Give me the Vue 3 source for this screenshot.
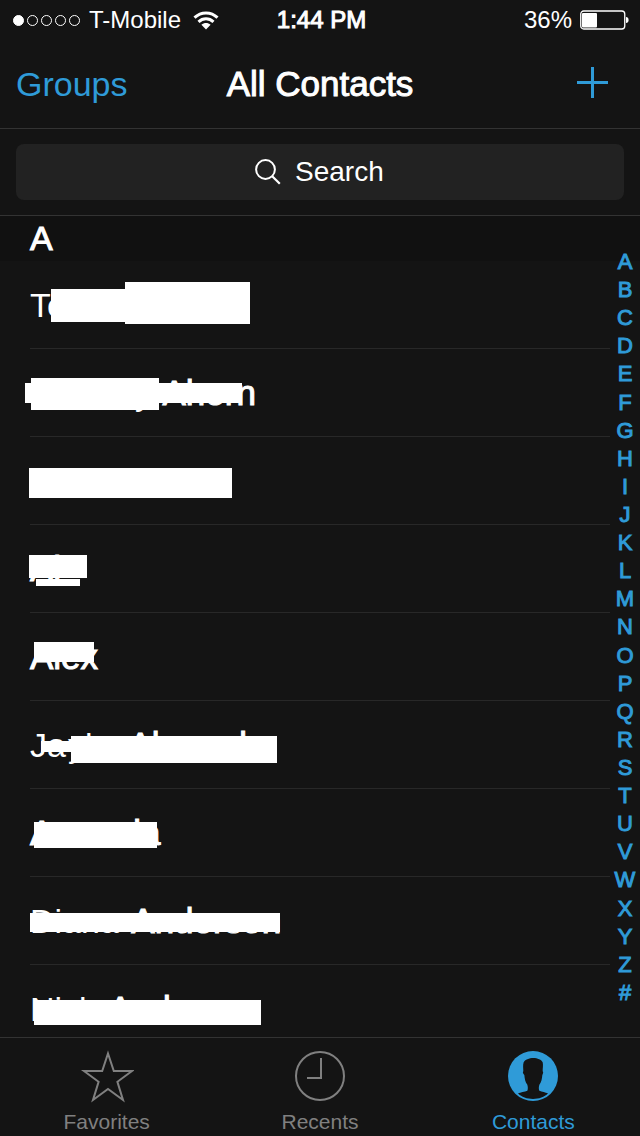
<template>
  <div class="phone">
    <header class="status-bar">
      <div class="carrier">
        <span class="signal" role="img" aria-label="Signal strength">
          <i v-for="n in 5" :key="n" class="dot" :class="{ filled: n <= 1 }"></i>
        </span>
        <span>T-Mobile</span>
        <svg class="wifi" viewBox="0 0 26 19" width="26" height="19" aria-hidden="true">
          <path d="M1.5 6.6C8 .3 18 .3 24.5 6.6" />
          <path d="M5.5 10.8c4.4-4 10.6-4 15 0" />
          <path class="wifi-base" d="M8.4 13.8c2.8-2.4 6.4-2.4 9.2 0L13 18.6z" />
        </svg>
      </div>
      <span class="medium">1:44 PM</span>
      <div class="power">
        <span>36%</span>
        <svg viewBox="0 0 50 20" width="50" height="20" aria-hidden="true">
          <rect x="0.75" y="1" width="44" height="18" rx="3" fill="none" stroke="#fff" stroke-width="1.3" />
          <rect x="2" y="3" width="15" height="14.5" rx="1" fill="#fff" />
          <path d="M46 7c1.6 0 2.6 1 2.6 3s-1 3-2.6 3z" fill="#fff" />
        </svg>
      </div>
    </header>

    <nav class="nav-bar">
      <a class="groups" href="#groups">Groups</a>
      <h1 class="title medium">All Contacts</h1>
      <button class="btn-add" type="button" aria-label="Add contact">
        <svg viewBox="0 0 31 31" width="31" height="31" aria-hidden="true">
          <path d="M0 15.5h31M15.5 0v31" stroke="currentColor" stroke-width="3" />
        </svg>
      </button>
    </nav>

    <div class="search-bar">
      <label class="search-box">
        <svg viewBox="0 0 26 26" width="26" height="26" aria-hidden="true">
          <circle cx="10.5" cy="10.5" r="9.4" fill="none" stroke="#fff" stroke-width="2" />
          <path d="M17.2 17.2l7.6 7.6" stroke="#fff" stroke-width="2.2" />
        </svg>
        <input v-model="query" class="search-input" type="text" placeholder="Search" aria-label="Search">
      </label>
    </div>

    <main class="contacts">
      <div class="scroller">
        <h2 class="section-title medium">A</h2>
        <ul class="list">
          <li v-for="(contact, i) in contacts" :key="i" class="row">
            <span class="name">
              <template v-for="(part, j) in contact.parts" :key="j">
                <span v-if="part.gap" class="gap" :style="{ width: part.gap + 'px' }"></span>
                <span v-else :class="{ last: part.bold }">{{ part.text }}</span>
              </template>
            </span>
            <span
              v-for="(m, k) in contact.masks"
              :key="'m' + k"
              class="mask"
              :style="{ left: m[0] + 'px', top: m[1] + 'px', width: m[2] + 'px', height: m[3] + 'px' }"
            ></span>
          </li>
        </ul>
      </div>
      <nav class="index" aria-label="Index">
        <a v-for="letter in letters" :key="letter" :href="'#' + letter">{{ letter }}</a>
      </nav>
    </main>

    <footer class="tab-bar">
      <button class="tab" type="button">
        <svg viewBox="0 0 54 54" width="54" height="54" aria-hidden="true">
          <path
            d="M28 4.5L33.8 22H52L37.4 32.8L43 51L28 40L13 51L18.6 32.8L4 22H22.2Z"
            fill="none" stroke="currentColor" stroke-width="2" stroke-miterlimit="8"
          />
        </svg>
        <span>Favorites</span>
      </button>
      <button class="tab" type="button">
        <svg viewBox="0 0 54 54" width="54" height="54" aria-hidden="true">
          <circle cx="27" cy="27" r="24" fill="none" stroke="currentColor" stroke-width="2" />
          <path d="M28 9v20H14" fill="none" stroke="currentColor" stroke-width="2" />
        </svg>
        <span>Recents</span>
      </button>
      <button class="tab active" type="button">
        <svg viewBox="-6 -6 162 162" width="54" height="54" aria-hidden="true">
          <circle cx="75" cy="75" r="75" fill="currentColor" />
          <path
            d="M76 21C88 21 101 26 104 34C106 42 104 53 104 61C107 63 105 68 103 72C102 84 100 94 94 101C92 108 92 114 94 119C102 123 112 123 120 127C109 139 93 144 75 144C57 144 41 139 30 127C38 123 50 123 58 119C60 114 60 108 58 101C52 94 50 84 49 72C45 68 43 63 46 61C46 53 44 42 47 34C50 26 64 21 76 21Z"
            fill="#141414"
          />
        </svg>
        <span>Contacts</span>
      </button>
    </footer>
  </div>
</template>

<script setup>
import { ref } from 'vue'

const query = ref('')
const letters = 'ABCDEFGHIJKLMNOPQRSTUVWXYZ#'.split('')

// masks: [left, top, width, height] inside the row
const contacts = [
  { parts: [{ text: 'Te' }], masks: [[51, 28, 75, 33], [125, 21, 125, 42]] },
  {
    parts: [{ gap: 105 }, { text: 'y ' }, { gap: 1 }, { text: 'Ahern', bold: true }],
    masks: [[25, 34, 217, 20], [31, 29, 128, 32]]
  },
  { parts: [], masks: [[29, 31, 203, 30]] },
  { parts: [{ text: 'Al', bold: true }], masks: [[29, 30, 58, 23], [36, 54, 44, 7]] },
  { parts: [{ text: 'Alex', bold: true }], masks: [[34, 29, 60, 20]] },
  {
    parts: [{ text: 'Ja' }, { gap: 2 }, { text: 'yl' }, { gap: 36 }, { text: 'Al', bold: true }, { gap: 68 }, { text: 'd', bold: true }],
    masks: [[41, 40, 31, 11], [71, 35, 206, 27]]
  },
  { parts: [{ text: 'Amanda', bold: true }], masks: [[34, 33, 123, 26]] },
  { parts: [{ text: 'Diana ' }, { gap: 3 }, { text: 'Anderson', bold: true }], masks: [[30, 36, 250, 19]] },
  { parts: [{ text: 'Nick ' }, { gap: 3 }, { text: 'And', bold: true }], masks: [[34, 35, 227, 25]] }
]
</script>

<style>
body {
  margin: 0;
  background: #141414;
}
</style>

<style scoped>
.phone {
  display: flex;
  flex-direction: column;
  height: 100vh;
  overflow: hidden;
  background: #141414;
  color: #fff;
  font-family: "Liberation Sans", Arial, sans-serif;
}

.phone * {
  box-sizing: border-box;
}

button {
  padding: 0;
  border: none;
  background: none;
  font-family: inherit;
  cursor: pointer;
}

a {
  color: #2f9bd8;
  text-decoration: none;
}

svg {
  display: block;
  flex: none;
}

.medium,
.last {
  font-weight: 400;
  -webkit-text-stroke: 1px currentColor;
}

.status-bar {
  display: grid;
  grid-template-columns: 1fr auto 1fr;
  align-items: center;
  flex: none;
  height: 40px;
  padding: 0 10px 0 13px;
  font-size: 24px;
  line-height: 28px;
}

.carrier,
.power {
  display: flex;
  align-items: center;
  gap: 9px;
}

.power {
  justify-content: flex-end;
  gap: 8px;
}

.signal {
  display: flex;
  gap: 3px;
}

.dot {
  width: 11px;
  height: 11px;
  border: 1px solid #fff;
  border-radius: 50%;
}

.dot.filled {
  background: #fff;
}

.wifi {
  margin-left: 3px;
  fill: none;
  stroke: #fff;
  stroke-width: 3;
}

.wifi .wifi-base {
  fill: #fff;
  stroke: none;
}

.nav-bar {
  display: grid;
  grid-template-columns: 1fr auto 1fr;
  align-items: center;
  flex: none;
  height: 89px;
  padding: 0 16px;
  border-bottom: 1px solid #333;
}

.groups {
  font-size: 34px;
  line-height: 40px;
}

.title {
  margin: 0;
  font-size: 35px;
  line-height: 40px;
}

.btn-add {
  justify-self: end;
  padding: 0 16px 4px;
  color: #2f9bd8;
}

.search-bar {
  flex: none;
  padding: 15px 16px;
  border-bottom: 1px solid #333;
}

.search-box {
  display: flex;
  align-items: center;
  justify-content: center;
  gap: 14px;
  height: 56px;
  border-radius: 8px;
  background: #222;
}

.search-input {
  width: 90px;
  height: 40px;
  padding: 0;
  border: none;
  outline: none;
  background: none;
  color: #fff;
  font-family: inherit;
  font-size: 28px;
}

.search-input::placeholder {
  color: #fff;
  opacity: 1;
}

.contacts {
  position: relative;
  flex: 1;
  min-height: 0;
}

.scroller {
  height: 100%;
  overflow-y: auto;
  scrollbar-width: none;
}

.section-title {
  margin: 0;
  padding: 0 30px;
  background: #111;
  font-size: 34px;
  line-height: 45px;
}

.list {
  margin: 0;
  padding: 0;
  list-style: none;
}

.row {
  position: relative;
  display: flex;
  align-items: center;
  height: 88px;
  padding: 0 30px;
}

.row::after {
  content: "";
  position: absolute;
  right: 30px;
  bottom: 0;
  left: 30px;
  border-bottom: 1px solid #282828;
}

.name {
  font-size: 34px;
  line-height: 40px;
  white-space: pre;
}

.last {
  font-size: 35px;
}

.gap {
  display: inline-block;
}

.mask {
  position: absolute;
  background: #fff;
}

.index {
  position: absolute;
  top: 0;
  right: 0;
  bottom: 0;
  display: flex;
  flex-direction: column;
  justify-content: space-between;
  width: 30px;
  padding: 32px 0 30px;
}

.index a {
  font-size: 22px;
  line-height: 28px;
  text-align: center;
  -webkit-text-stroke: 1px currentColor;
}

.tab-bar {
  display: grid;
  grid-template-columns: repeat(3, 1fr);
  flex: none;
  height: 99px;
  border-top: 1px solid #333;
}

.tab {
  display: flex;
  flex-direction: column;
  align-items: center;
  gap: 7px;
  padding-top: 11px;
  color: #808080;
  font-size: 21px;
  line-height: 24px;
}

.tab.active {
  color: #2f9bd8;
}
</style>
